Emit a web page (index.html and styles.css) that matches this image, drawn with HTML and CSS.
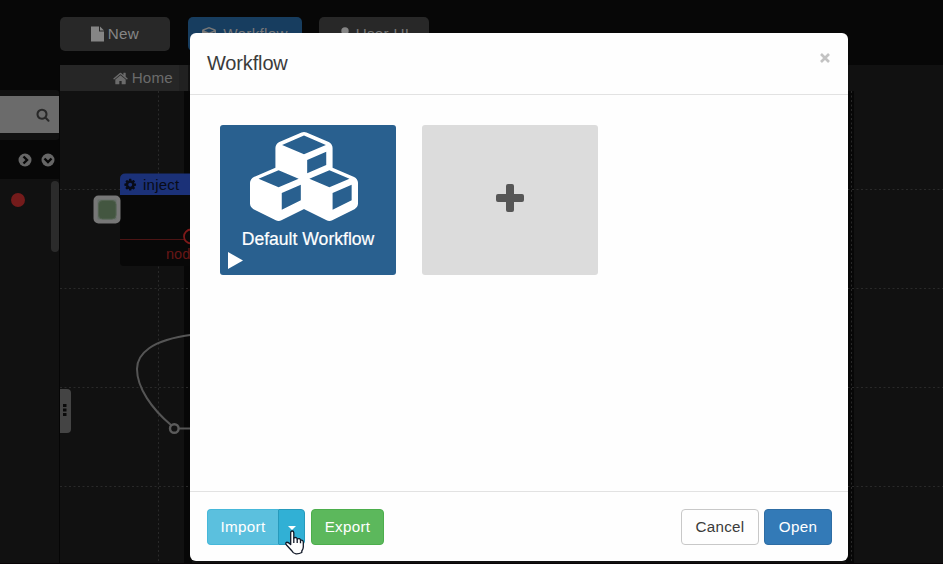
FILE: index.html
```html
<!DOCTYPE html>
<html lang="en">
<head>
<meta charset="utf-8">
<title>Workflow</title>
<link rel="stylesheet" href="styles.css">
</head>
<body>
<div class="app">
  <header class="toolbar">
    <button class="tool"><svg width="13" height="16" viewBox="0 0 13 16"><path d="M0 .5h8v5h5V15.500H0zM9 .5l4 4H9z"/></svg><span>New</span></button>
    <button class="tool tool-active"><svg width="14" height="15" viewBox="0 0 14 15"><path fill-rule="evenodd" d="M7 0l6 2.200q1 .4 1 1.500v7q0 1-1 1.500L7 15l-6-2.800q-1-.5-1-1.500v-7q0-1.100 1-1.500zM7 1.600L2 3.500l5 1.900 5-1.900zM7.800 6.800v6l4.700-2.300V5z"/></svg><span>Workflow</span></button>
    <button class="tool tool-user"><svg width="12" height="15" viewBox="0 0 12 15"><circle cx="6" cy="4" r="3.700"/><path d="M0 15V11q0-3 3-3h6q3 0 3 3v4z"/></svg><span>User UI</span></button>
  </header>
  <div class="workspace">
    <aside class="sidebar">
      <div class="search"><svg width="14" height="14" viewBox="0 64 1792 1728"><path d="M1216 832q0-185-131.500-316.500t-316.500-131.500-316.500 131.500-131.500 316.500 131.500 316.500 316.500 131.500 316.500-131.500 131.500-316.500zm512 832q0 52-38 90t-90 38q-54 0-90-38l-343-342q-179 124-399 124-143 0-273.500-55.500t-225-150-150-225-55.500-273.500 55.500-273.500 150-225 225-150 273.500-55.500 273.500 55.500 225 150 150 225 55.500 273.500q0 220-124 399l343 343q37 37 37 90z"/></svg></div>
      <div class="folds">
        <svg width="14" height="14" viewBox="0 0 14 14"><circle cx="7" cy="7" r="6.500"/><path d="M5.500 3.500L9 7l-3.500 3.500"/></svg>
        <svg width="14" height="14" viewBox="0 0 14 14"><circle cx="7" cy="7" r="6.500"/><path d="M3.500 5.500L7 9l3.500-3.500"/></svg>
      </div>
      <div class="nodes"><i class="status"></i><i class="scroll"></i></div>
    </aside>
    <main class="editor">
      <div class="tabs"><div class="tab"><svg width="15" height="13" viewBox="64 220 1664 1330"><path d="M1472 992v480q0 26-19 45t-45 19h-384v-384h-256v384h-384q-26 0-45-19t-19-45v-480q0-1 .5-3t.5-3l575-474 575 474q1 2 1 6zm223-69l-62 74q-8 9-21 11h-3q-13 0-21-7l-692-577-692 577q-12 8-24 7-13-2-21-11l-62-74q-8-10-7-23.500t11-21.500l719-599q32-26 76-26t76 26l244 204v-195q0-14 9-23t23-9h192q14 0 23 9t9 23v408l219 182q10 8 11 21.500t-7 23.500z"/></svg><span>Home</span></div><div class="tab-end"></div></div>
      <svg class="canvas" viewBox="60 91 883 473" width="883" height="473">
        <path class="strip" d="M184 91h8v473h-8zM846 91h8v473h-8z"/>
        <path class="grid" d="M60 189.500H943M60 288.500H943M60 387.500H943M60 486.500H943M158.500 91V564M851.500 91V564"/>
        <path class="body" d="M120 184h90v82h-86q-4 0-4-4z"/>
        <path class="title" d="M120 195v-16q0-5.500 5.500-5.500H210V195z"/>
        <path class="gear" transform="translate(123.400 177.900) scale(.0076)" d="M1152 896q0-106-75-181t-181-75-181 75-75 181 75 181 181 75 181-75 75-181zm512-109v222q0 12-8 23t-20 13l-185 28q-19 54-39 91 35 50 107 138 10 12 10 25t-9 23q-27 37-99 108t-94 71q-12 0-26-9l-138-108q-44 23-91 38-16 136-29 186-7 28-36 28h-222q-14 0-24.500-8.500t-11.500-21.500l-28-184q-49-16-90-37l-141 107q-10 9-25 9-14 0-25-11-126-114-165-168-7-10-7-23 0-12 8-23 15-21 51-66.500t54-70.500q-27-50-41-99l-183-27q-13-2-21-12.500t-8-23.500v-222q0-12 8-23t19-13l186-28q14-46 39-92-40-57-107-138-10-12-10-24 0-10 9-23 26-36 98.500-107.500t94.500-71.500q13 0 26 10l138 107q44-23 91-38 16-136 29-186 7-28 36-28h222q14 0 24.500 8.500t11.500 21.500l28 184q49 16 90 37l142-107q9-9 24-9 13 0 25 10 129 119 165 170 7 8 7 22 0 12-8 23-15 21-51 66.500t-54 70.500q26 50 41 98l183 28q13 2 21 12.500t8 23.500z"/>
        <text class="title-text" x="143" y="190">inject</text>
        <path class="port-line" d="M120 239.500h64"/>
        <circle class="port" cx="191" cy="236.500" r="7"/>
        <text class="port-text" x="166" y="259">node</text>
        <rect class="trigger" x="95.500" y="197.500" width="23" height="24" rx="3"/>
        <rect class="trigger-fill" x="98.500" y="200.500" width="17.500" height="18.500" rx="4"/>
        <path class="wire" d="M192 334.800C151 340 137 354 137 369C137 388 152 409 171 425M179 428.500h13"/>
        <circle class="joint" cx="174.300" cy="428.500" r="4.300"/>
        <path class="handle" d="M60 389h7q4 0 4 4v36q0 4-4 4h-7z"/>
        <path class="dots" d="M63 404h3.500v3H63zM63 408.500h3.500v3H63zM63 413h3.500v3H63z"/>
      </svg>
    </main>
  </div>
  <div class="edge"></div>
</div>
<div class="overlay">
  <section class="modal">
    <header class="modal-header"><h1>Workflow</h1><button class="close" aria-label="Close"><svg width="10" height="10" viewBox="0 0 10 10"><path d="M1 1l8 8M9 1L1 9"/></svg></button></header>
    <div class="modal-body">
      <div class="card card-flow"><svg class="cubes" width="108" height="89" viewBox="0 64 2176 1792"><path d="M640 1632l384-192v-314l-384 164v342zM576 1178l404-173-404-173-404 173zM1664 1632l384-192v-314l-384 164v342zM1600 1178l404-173-404-173-404 173zM1152 893l384-165v-266l-384 164v267zM1088 512l441-189-441-189-441 189zM2176 1088v416q0 36-19 67t-52 47l-448 224q-25 14-57 14t-57-14l-448-224q-4-2-7-4-2 2-7 4l-448 224q-25 14-57 14t-57-14l-448-224q-33-16-52-47t-19-67v-416q0-38 21.500-70t56.500-48l434-186v-400q0-38 21.500-70t56.500-48l448-192q23-10 50-10t50 10l448 192q35 16 56.500 48t21.500 70v400l434 186q36 16 57 48t21 70z"/></svg><span class="name">Default Workflow</span><svg class="play" width="15" height="17" viewBox="0 0 15 17"><path d="M0 0l15 8.500L0 17z"/></svg></div>
      <div class="card card-add"><svg width="28" height="28" viewBox="0 0 28 28"><path d="M12 0h4q2 0 2 2v8h8q2 0 2 2v4q0 2-2 2h-8v8q0 2-2 2h-4q-2 0-2-2v-8H2q-2 0-2-2v-4q0-2 2-2h8V2q0-2 2-2z"/></svg></div>
    </div>
    <footer class="modal-footer">
      <div class="group"><button class="btn import">Import</button><button class="btn toggle" aria-label="More"><i class="caret"></i></button></div>
      <button class="btn export">Export</button>
      <button class="btn cancel">Cancel</button>
      <button class="btn open">Open</button>
    </footer>
  </section>
</div>
<svg class="cursor" width="20" height="25" viewBox="0 0 20 25"><path d="M5.700 14.500V2.700Q5.700 1 7.200 1T8.800 2.700V8Q11.800 6.600 12.200 9Q15 7.800 15.500 10.200Q18.300 9.500 18.300 12.500V17Q18.300 19 16.800 21V22.500Q14 24 11 23.800Q8 23.500 7 21L1.500 15Q0 13 1.500 12.300Q3 12 5.700 14.500z"/><path d="M8.800 8v5M12.200 9v4M15.500 10.200v3"/></svg>
</body>
</html>
```
FILE: styles.css
```css
* { box-sizing: border-box; }
body {
  margin: 0;
  width: 943px;
  height: 564px;
  overflow: hidden;
  background: #070707;
  font: 15.2px "Liberation Sans", Arial, sans-serif;
}
button { font: inherit; margin: 0; padding: 0; border: 0; background: none; }
h1 { margin: 0; font-weight: 400; }
svg { display: block; flex: none; }
.app { height: 564px; display: flex; flex-direction: column; position: relative; }
.toolbar { height: 65px; padding: 17px 0 0 60px; display: flex; flex: none; }
.tool {
  width: 110px; height: 34px; border-radius: 5px; margin-right: 18px;
  display: flex; align-items: center; justify-content: center; gap: 4px;
  background: #282828; color: #858585; letter-spacing: .3px;
}
.tool span { padding-bottom: 2px; }
.tool svg { fill: #858585; }
.tool-active { width: 114px; margin-right: 17px; background: #173d5f; color: #777; gap: 7px; }
.tool-active svg { fill: #777; }
.tool-user { color: #777; gap: 5px; }
.workspace { flex: 1; display: flex; min-height: 0; }
.sidebar { width: 60px; flex: none; padding-top: 25px; border-right: 1px solid #060606; }
.search {
  height: 50px; border: solid #111; border-width: 6px 0 7px; background: #6b6b6b;
  display: flex; align-items: center; justify-content: flex-end; padding-right: 9px;
  border-radius: 0 3px 3px 0;
}
.search svg { fill: #282828; }
.folds { height: 39px; display: flex; justify-content: flex-end; align-items: center; gap: 9px; padding-right: 4.5px; }
.folds circle { fill: #666; }
.folds path { fill: none; stroke: #070707; stroke-width: 2.4; }
.nodes { height: 385px; background: #111; display: flex; justify-content: space-between; padding: 2px 0 0 11px; }
.status { width: 14px; height: 14px; border-radius: 50%; background: #741b1b; margin-top: 12px; }
.scroll { width: 8px; height: 71px; border-radius: 4px; background: #2b2b2b; }
.editor { flex: 1; background: #111; min-width: 0; }
.tabs { height: 26px; display: flex; }
.tab { width: 119px; background: #262626; color: #6b6b6b; display: flex; align-items: center; justify-content: flex-end; padding-right: 6px; gap: 4px; letter-spacing: .2px; }
.tab svg { fill: #6b6b6b; }
.tab span { padding-bottom: 1px; }
.tab-end { width: 9px; background: #212121; }
.canvas text { font-size: 15px; letter-spacing: .25px; }
.canvas .port-text { font-size: 14.5px; letter-spacing: 0; }
.strip { fill: #070707; }
.grid { fill: none; stroke: #292929; stroke-dasharray: 2 2.500; }
.body { fill: #080808; }
.title { fill: #1b3178; }
.gear { fill: #080b17; fill-rule: evenodd; }
.title-text { fill: #080b17; }
.port-line { stroke: #4b1414; }
.port { fill: none; stroke: #7d1919; stroke-width: 1.8; }
.port-text { fill: #671616; }
.trigger { fill: #66706a; stroke: #777; stroke-width: 4; }
.trigger-fill { fill: #435640; stroke: #536250; }
.wire { fill: none; stroke: #555; stroke-width: 2; }
.joint { fill: #111; stroke: #5b5b5b; stroke-width: 2.4; }
.handle { fill: #444; }
.dots { fill: #0a0a0a; }
.edge { position: absolute; left: 0; right: 0; bottom: 0; height: 1px; background: #080406; }
.overlay { position: absolute; top: 33px; left: 0; width: 943px; display: flex; padding-left: 190px; }
.modal {
  width: 658px; height: 528px; border-radius: 6px; background: #fefefe;
  display: flex; flex-direction: column; overflow: hidden;
}
.modal-header { height: 62px; flex: none; border-bottom: 1px solid #e2e2e2; display: flex; align-items: center; justify-content: space-between; padding: 0 18px 0 17px; }
.modal-header h1 { font-size: 20px; letter-spacing: -.15px; color: #3b3b3b; }
.close { margin-top: -11px; }
.close path { stroke: #c3c3c3; stroke-width: 2.6; }
.modal-body { flex: 1; padding: 30px; display: flex; gap: 26px; }
.card { width: 176px; height: 150px; border-radius: 3px; display: flex; flex-direction: column; align-items: center; }
.card-flow { background: #29608f; color: #fff; padding-top: 7px; }
.card-flow svg { fill: #fff; }
.cubes { margin-left: -8px; }
.name { font-size: 17.6px; line-height: 20px; margin-top: 8px; -webkit-text-stroke: .2px #fff; }
.play { align-self: flex-start; margin: 3px 0 0 8px; }
.card-add { justify-content: center; background: #dcdcdc; padding-bottom: 4px; }
.card-add svg { fill: #565656; }
.modal-footer { height: 70px; flex: none; border-top: 1px solid #e2e2e2; padding: 17px 16px 0 17px; display: flex; }
.group { display: flex; margin-right: 6px; }
.btn { height: 36px; border: 1px solid; border-radius: 4px; padding-bottom: 2px; color: #fff; letter-spacing: .3px; }
.import { width: 71px; background: #5bc0de; border-color: #46b8da; border-right: 0; border-radius: 4px 0 0 4px; }
.toggle { width: 27px; background: #31b0d5; border-color: #269abc; border-radius: 0 4px 4px 0; display: flex; justify-content: center; align-items: center; }
.caret { border: 4px solid transparent; border-top-color: #fff; border-bottom: 0; margin-top: 4px; }
.export { width: 73px; background: #5cb85c; border-color: #4cae4c; }
.cancel { width: 78px; background: #fefefe; border-color: #c8c8c8; color: #3b3b3b; margin-left: auto; }
.open { width: 68px; background: #337ab7; border-color: #2e6da4; margin-left: 5px; }
.cursor { position: absolute; left: 285px; top: 530px; }
.cursor path { fill: #fff; stroke: #111827; stroke-width: 1.3; stroke-linejoin: round; }
.cursor path + path { fill: none; }
```
